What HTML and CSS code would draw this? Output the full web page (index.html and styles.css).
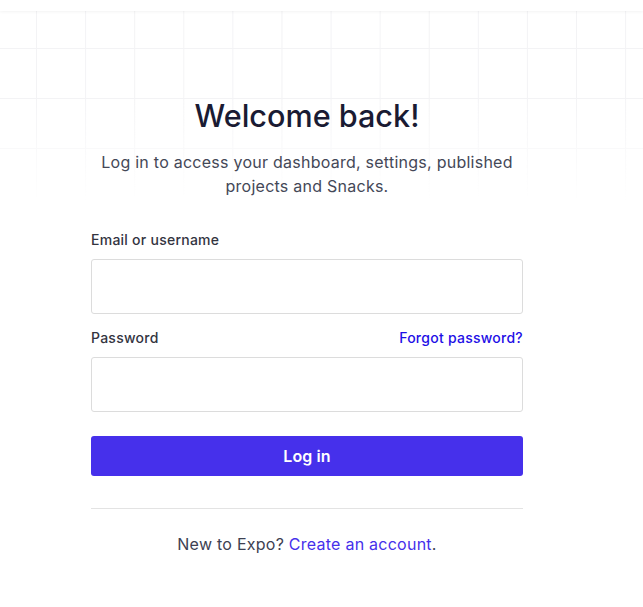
FILE: index.html
```html
<!DOCTYPE html>
<html lang="en">
<head>
<meta charset="utf-8">
<title>Log in</title>
<link rel="stylesheet" href="styles.css">
</head>
<body>
<header class="topbar"></header>
<div class="grid-bg"></div>
<main class="page">
  <div class="card">
    <h1 class="title">Welcome back!</h1>
    <p class="subtitle">Log in to access your dashboard, settings, published projects and Snacks.</p>
    <form class="form">
      <div class="field">
        <div class="label-row"><label class="label" for="user">Email or username</label></div>
        <input class="input" id="user" type="text">
      </div>
      <div class="field">
        <div class="label-row">
          <label class="label" for="pass">Password</label>
          <a class="forgot" href="#">Forgot password?</a>
        </div>
        <input class="input" id="pass" type="password">
      </div>
      <button class="btn" type="button">Log in</button>
    </form>
    <hr class="divider">
    <p class="footer">New to Expo? <a class="link" href="#">Create an account</a>.</p>
  </div>
</main>
</body>
</html>
```
FILE: styles.css
```css
* { box-sizing: border-box; }
html, body { margin: 0; padding: 0; background: #fff; }
body {
  font-family: Inter, "Noto Sans", sans-serif;
  color: #3a3d4a;
  position: relative;
  min-height: 607px;
  letter-spacing: 0.25px;
}
.topbar {
  height: 11px;
  background: #fff;
  box-shadow: 0 1px 3px rgba(0,0,0,0.05);
  position: relative;
  z-index: 2;
}
.grid-bg {
  position: absolute;
  left: 0; right: 0; top: 11px;
  height: 190px;
  background-image:
    linear-gradient(to right, #f3f3f5 1px, transparent 1px),
    linear-gradient(to bottom, #f3f3f5 1px, transparent 1px);
  background-size: 49.1px 50px;
  background-position: 36px 37px;
  -webkit-mask-image: linear-gradient(to bottom, #000 45%, transparent 100%);
  mask-image: linear-gradient(to bottom, #000 45%, transparent 100%);
  z-index: 0;
}
.page {
  position: relative;
  z-index: 1;
  display: flex;
  justify-content: center;
  padding-left: 91px;
  padding-right: 120px;
}
.card {
  width: 432px;
  padding-top: 85px;
}
.title {
  margin: 0;
  text-align: center;
  font-size: 30.6px;
  font-weight: 500;
  line-height: 40px;
  color: #1a1b33;
  letter-spacing: 0;
}
.subtitle {
  margin: 14px 0 0;
  text-align: center;
  font-size: 16px;
  line-height: 24px;
  font-weight: 400;
  color: #444857;
  padding: 0 4px;
}
.form { margin-top: 33px; }
.field { margin-bottom: 15px; }
.field:last-of-type { margin-bottom: 24px; }
.label-row {
  display: flex;
  justify-content: space-between;
  align-items: baseline;
  height: 18px;
  margin-bottom: 10px;
}
.label {
  font-size: 14px;
  font-weight: 500;
  color: #33343f;
}
.forgot {
  font-size: 14px;
  font-weight: 500;
  color: #1e0fe6;
  text-decoration: none;
}
.input {
  display: block;
  width: 100%;
  height: 55px;
  border: 1px solid #dcdcdc;
  border-radius: 3px;
  background: #fff;
  font: inherit;
}
.btn {
  display: block;
  width: 100%;
  height: 40px;
  border: 0;
  border-radius: 3px;
  background: #4630eb;
  color: #fff;
  font-family: Inter, "Noto Sans", sans-serif;
  font-size: 16px;
  font-weight: 600;
  letter-spacing: 0.1px;
}
.divider {
  margin: 32px 0 0;
  border: 0;
  border-top: 1px solid #e3e3e3;
}
.footer {
  margin: 23px 0 0;
  text-align: center;
  font-size: 16px;
  line-height: 24px;
  color: #3d4152;
}
.link { color: #4630eb; text-decoration: none; }
```
